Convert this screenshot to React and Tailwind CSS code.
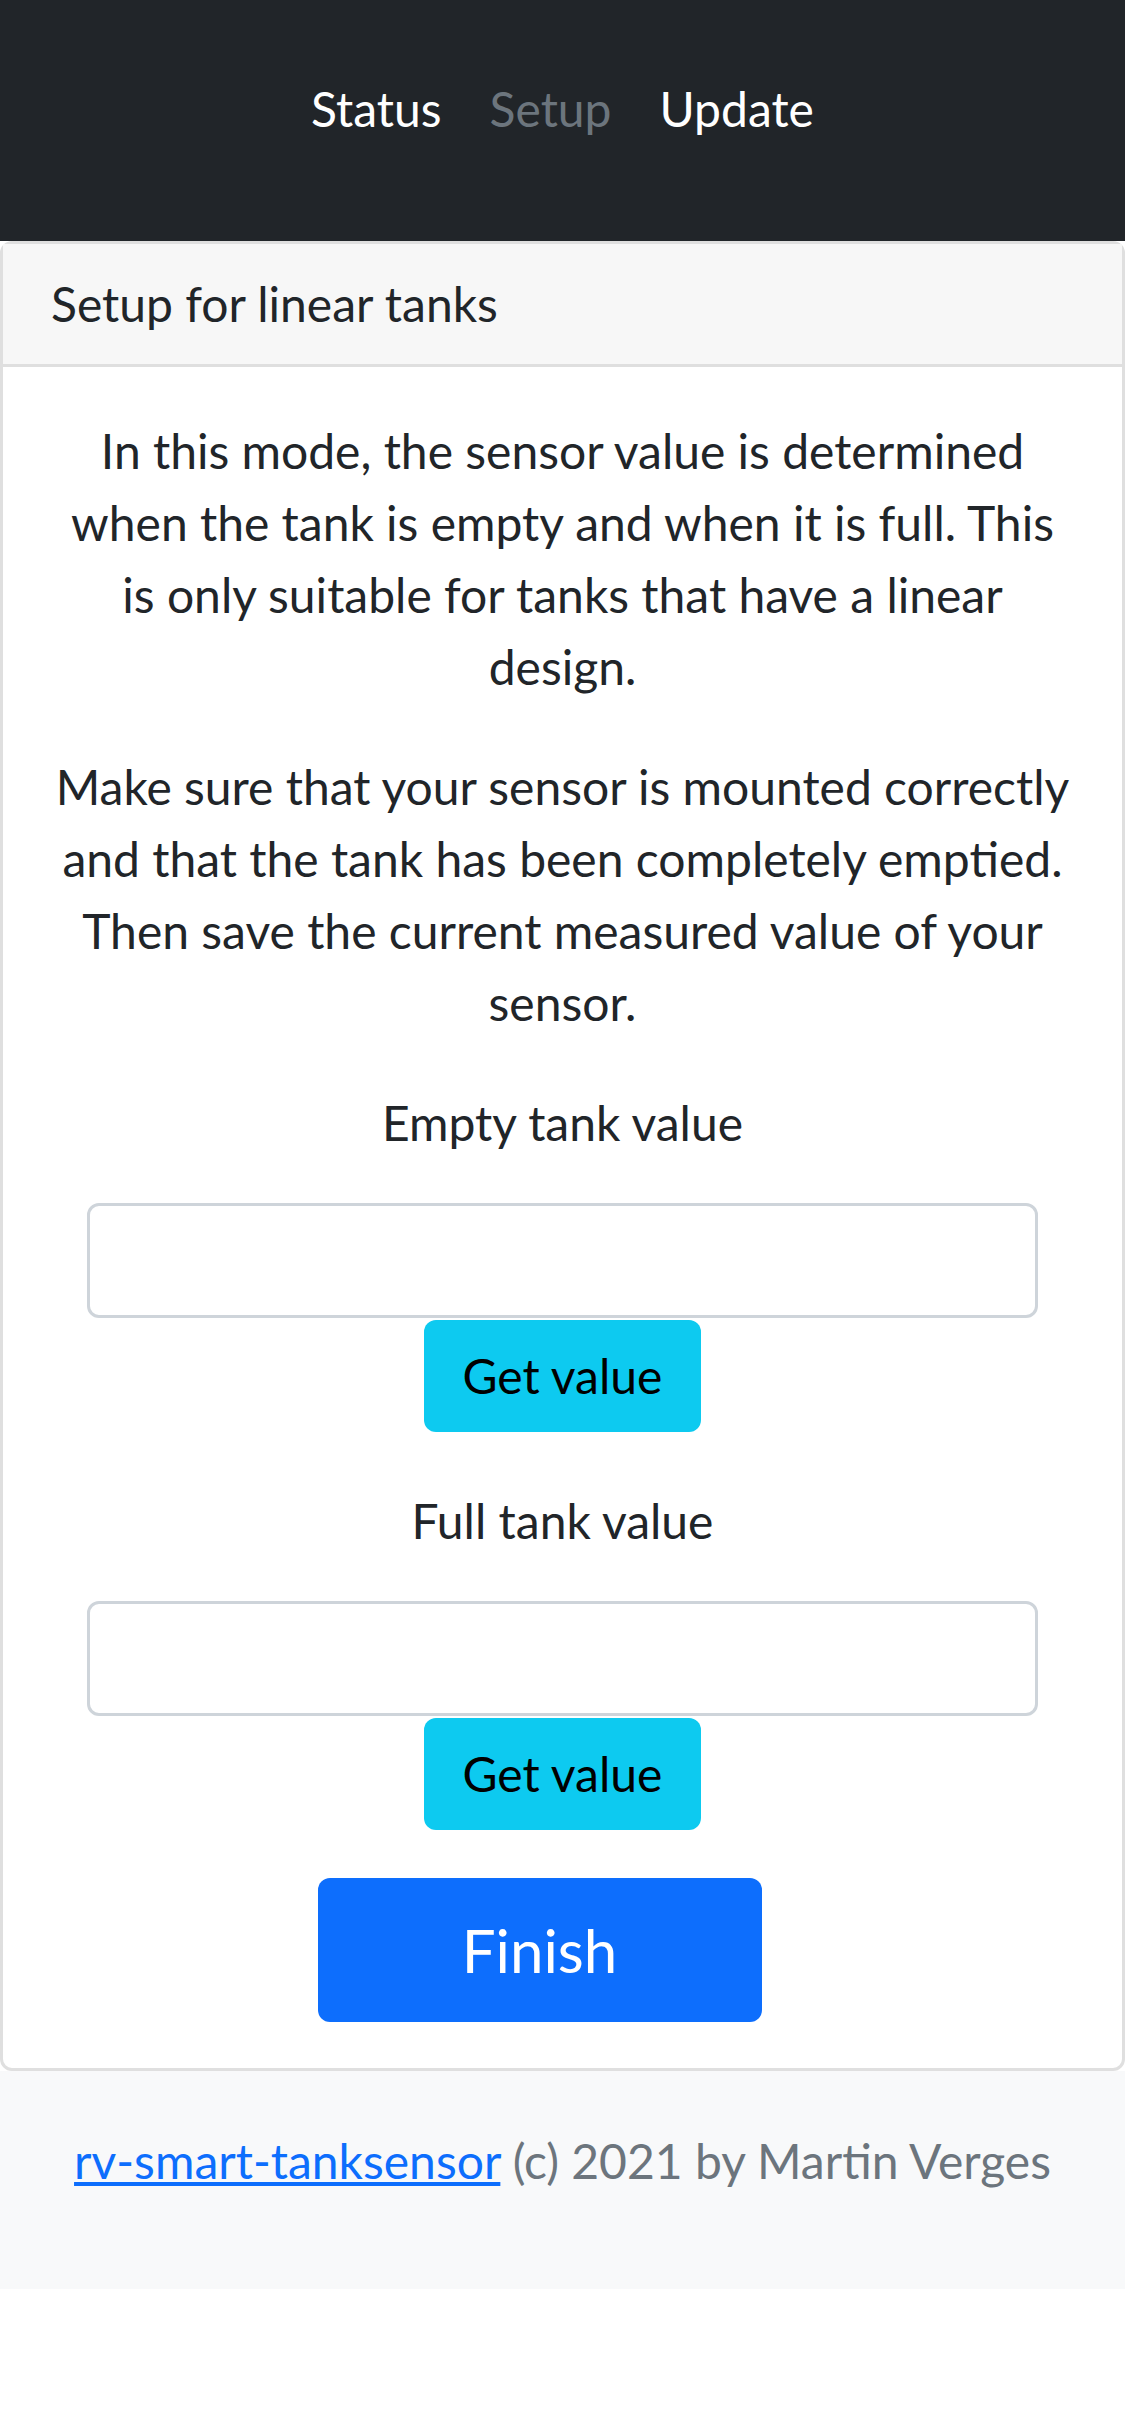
import React from "react";

const font = { fontFamily: '"Lato", "Noto Sans", sans-serif' };

function NavLink({ children, active }) {
  return (
    <a
      href="#"
      className={
        "px-[24px] text-[48px] leading-[72px] " +
        (active ? "text-[#6c757d]" : "text-white")
      }
    >
      {children}
    </a>
  );
}

function ValueField({ label }) {
  return (
    <div className="flex flex-col items-center">
      <p className="mb-[44px]">{label}</p>
      <input
        type="text"
        className="h-[115px] w-[951px] rounded-[12px] border-[3px] border-[#ced4da] bg-white px-[36px] text-[48px] outline-none"
      />
      <button className="mt-[2px] h-[112px] w-[277px] rounded-[12px] bg-[#0dcaf0] text-[48px] leading-[72px] text-black">
        Get value
      </button>
    </div>
  );
}

export default function App() {
  return (
    <div className="min-h-[2436px] bg-white text-[48px] leading-[72px] text-[#212529]" style={font}>
      <nav className="flex h-[241px] justify-center bg-[#212529] pt-[73px]">
        <div className="flex h-[72px]">
          <NavLink>Status</NavLink>
          <NavLink active>Setup</NavLink>
          <NavLink>Update</NavLink>
        </div>
      </nav>

      <div className="rounded-[12px] border-[3px] border-[#dfdfdf]">
        <div className="border-b-[3px] border-[#dfdfdf] bg-[#f7f7f7] px-[48px] py-[24px]">
          Setup for linear tanks
        </div>
        <div className="p-[48px] pb-[46px] text-center">
          <p className="mb-[48px]">
            In this mode, the sensor value is determined
            <br />
            when the tank is empty and when it is full. This
            <br />
            is only suitable for tanks that have a linear
            <br />
            design.
          </p>
          <p className="mb-[48px]">
            Make sure that your sensor is mounted correctly
            <br />
            and that the tank has been completely emptied.
            <br />
            Then save the current measured value of your
            <br />
            sensor.
          </p>

          <ValueField label="Empty tank value" />
          <div className="h-[53px]" />
          <ValueField label="Full tank value" />

          <div className="mt-[48px] flex justify-center pr-[46px]">
            <button className="h-[144px] w-[444px] rounded-[12px] bg-[#0d6efd] text-[60px] leading-[90px] text-white">
              Finish
            </button>
          </div>
        </div>
      </div>

      <footer className="h-[218px] bg-[#f8f9fa] pt-[54px] text-center text-[#6c757d]">
        <p>
          <a href="#" className="text-[#0d6efd] underline">
            rv-smart-tanksensor
          </a>{" "}
          (c) 2021 by Martin Verges
        </p>
      </footer>
    </div>
  );
}
